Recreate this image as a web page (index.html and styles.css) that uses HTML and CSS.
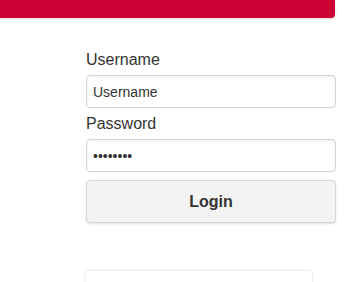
FILE: index.html
```html
<!DOCTYPE html>
<html>
  <head>
    <meta charset="utf-8"/>
    <title>Login</title>
    <link rel="stylesheet" href="styles.css">
  </head>
  <body>
    <div class="topbar"></div>
    <form class="login" name="login">
      <div class="elform">
        <label class="label" for="user">Username</label>
        <input class="txt" id="user" name="username" type="text" value="Username">
      </div>
      <div class="elform second">
        <label class="label" for="pass">Password</label>
        <input class="txt" id="pass" name="password" type="password" value="password">
      </div>
      <button id="btn" type="button">Login</button>
    </form>
    <div class="card"></div>
  </body>
</html>
```

FILE: styles.css
```css
html, body{
  margin: 0;
  background: #fff;
  overflow: hidden;
}
body{
  font-family: "Liberation Sans", Arial, sans-serif;
  color: #333;
}
.topbar{
  width: 335px;
  height: 18px;
  background-color: #cc0033;
  border-radius: 0 0 4px 0;
  box-shadow: 0 1px 3px rgba(0,0,0,0.15);
}
.login{
  width: 250px;
  margin-left: 86px;
  padding-top: 32px;
}
.label{
  display: block;
  font-size: 16px;
  line-height: 20px;
  margin-bottom: 5px;
}
.second{
  margin-top: 6px;
}
.txt{
  box-sizing: border-box;
  display: block;
  width: 250px;
  height: 33px;
  padding: 0 6px;
  font-family: inherit;
  font-size: 14px;
  color: #333;
  background: #fff;
  border: solid #d4d4d4 1px;
  border-radius: 4px;
  box-shadow: inset 0 1px 2px rgba(0,0,0,0.08);
  outline: none;
}
#btn{
  box-sizing: border-box;
  display: block;
  width: 250px;
  height: 43px;
  margin-top: 8px;
  font-family: inherit;
  font-size: 16px;
  font-weight: bold;
  color: #333;
  background-color: #f3f3f3;
  border: solid #d6d6d6 1px;
  border-radius: 4px;
  box-shadow: 0 1px 2px rgba(0,0,0,0.12);
}
.card{
  width: 226px;
  height: 40px;
  margin: 48px 0 0 86px;
  background: #fff;
  border-radius: 3px;
  box-shadow: 0 0 3px rgba(0,0,0,0.18);
}
```
